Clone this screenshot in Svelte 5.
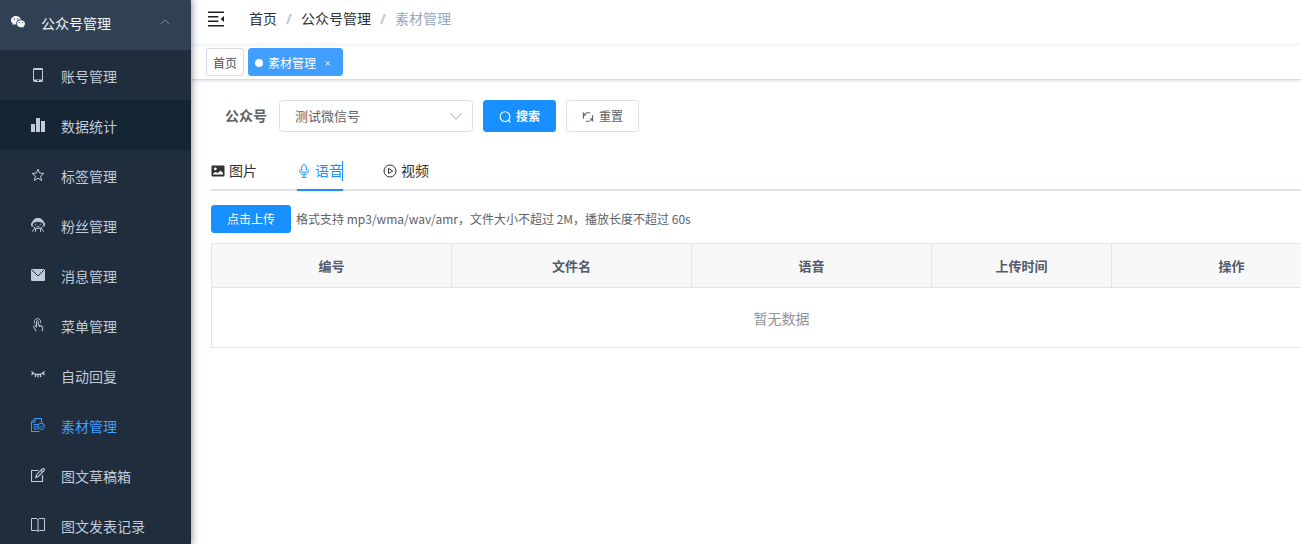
<script>
  const menuItems = [
    { icon: "phone", label: "账号管理" },
    { icon: "chart", label: "数据统计", hover: true },
    { icon: "star", label: "标签管理" },
    { icon: "people", label: "粉丝管理" },
    { icon: "message", label: "消息管理" },
    { icon: "touch", label: "菜单管理" },
    { icon: "eye", label: "自动回复" },
    { icon: "material", label: "素材管理", active: true },
    { icon: "edit", label: "图文草稿箱" },
    { icon: "book", label: "图文发表记录" },
  ];

  const tabs = [
    { name: "image", label: "图片" },
    { name: "voice", label: "语音" },
    { name: "video", label: "视频" },
  ];

  const columns = [
    { label: "编号", width: 240 },
    { label: "文件名", width: 240 },
    { label: "语音", width: 240 },
    { label: "上传时间", width: 180 },
    { label: "操作", width: 240 },
  ];

  let menuOpen = $state(true);
  let activeTab = $state("voice");
  let account = $state("test");
</script>

{#snippet icon(name)}
  <svg class="icon" viewBox="0 0 14 14" fill="none" stroke="currentColor" aria-hidden="true">
    {#if name === "wechat"}
      <g fill="currentColor" stroke="none">
        <path fill-rule="evenodd" d="M5 1C2.200 1 0 2.900 0 5.300c0 1.400.7 2.500 1.900 3.300l-.5 1.500 1.800-.9c.6.200 1.200.3 2 .3C4.700 6.500 6.900 4.400 9.900 4.500 9.500 2.400 7.500 1 5 1zM3.300 3.200a.7.700 0 1 1 0 1.400.7.700 0 0 1 0-1.400zM6.800 3.200a.7.700 0 1 1 0 1.400.7.700 0 0 1 0-1.400z" />
        <path fill-rule="evenodd" d="M14 8.700C14 6.700 12.200 5.200 9.900 5.200S5.800 6.800 5.800 8.700s1.800 3.500 4.100 3.500c.5 0 1-.1 1.500-.2l1.400.8-.4-1.300c1-.7 1.600-1.700 1.600-2.800zM8.500 7a.6.600 0 1 1 0 1.200.6.600 0 0 1 0-1.200zM11.300 7a.6.600 0 1 1 0 1.200.6.600 0 0 1 0-1.200z" />
      </g>
    {:else if name === "phone"}
      <rect x="2.500" y=".5" width="9" height="13" rx="1" />
      <path d="M2.500 1h9M2.500 12.500h9" stroke-width="2" />
      <path d="M6 12.500h2" stroke="#1f2d3d" />
    {:else if name === "chart"}
      <path d="M0 6h4v8H0zM5 0h4v14H5zM10 3h4v11h-4z" fill="currentColor" stroke="none" />
    {:else if name === "star"}
      <path d="M7 1.200l1.600 3.900 4.200.3-3.200 2.700 1 4.400L7 10.200l-3.600 2.300 1-4.400L1.200 5.400l4.200-.3z" />
    {:else if name === "people"}
      <path d="M1.500 6.500C1.500 3 3.500.7 7 .7s5.500 2.300 5.500 5.800c0 2.700-2.100 4-5.500 4s-5.500-1.300-5.500-4z" />
      <path d="M1.500 5C2 2 4 .5 7 .5S12 2 12.500 5C10 3 4 3 1.500 5z" fill="currentColor" />
      <path d="M4.800 5.700v1.500M9.200 5.700v1.500M5.500 8.700h3M.6 4.800v3.400M13.400 4.800v3.400" />
      <path d="M3.700 10.200L1.300 13.700M10.300 10.200l2.400 3.500M4.500 10.500v3.300M9.500 10.500v3.300" />
    {:else if name === "message"}
      <rect y="1" width="14" height="12" rx="1" fill="currentColor" stroke="none" />
      <path d="M.5 1.500L7 8l6.500-6.500" stroke="#1f2d3d" />
    {:else if name === "touch"}
      <path d="M3.800 5.500C2.500 2.700 4.300.7 6.500.7s4 2 2.700 4.500M5.500 9.500V3.500c0-1.200 1.800-1.200 1.800 0v3.600l3.200.8c1.100.3 1.500 1 1.300 2l-.7 3.300M5.500 8.500L3.800 7.700c-.8-.3-1.500.5-1.100 1.200l2.500 4.300M8.500 7.500V9M10.300 8v1.300" />
    {:else if name === "eye"}
      <path stroke-width="1.300" d="M.5 3.300C3.500 7.500 10.500 7.500 13.500 3.300M2.300 5.200L.5 7M4.800 6.300L4.200 9M7 6.500v3M9.200 6.300l.6 2.700M11.700 5.200L13.500 7" />
    {:else if name === "material"}
      <path d="M8.500 13.500h-8V4L4 .5h6.500v4M4 .5V4H.5M2.500 6.500H7M2.500 8.800h4M2.500 11h4.500" />
      <circle cx="10.300" cy="8.300" r="3.200" />
      <path d="M8.800 8.300l1.200 1.200 2-2.200" />
    {:else if name === "edit"}
      <path d="M7.500 2.500h-7v11h11V7" stroke-width="1.200" />
      <path d="M4.800 9.500l.7-2.800L11.300.9c.6-.6 1.200-.5 1.700 0s.6 1.100 0 1.700L7.300 8.500zM10 2.200l1.800 1.800" stroke-width="1.200" />
    {:else if name === "book"}
      <path d="M.5.500H5c1.200 0 2 .6 2 1.500C7 1.100 7.800.5 9 .5h4.500v12H9c-1.200 0-2 .5-2 1 0-.5-.8-1-2-1H.5zM7 2v11.500" />
    {:else if name === "fold"}
      <path d="M0 1h14M0 5h9M0 9h9M0 13h14" stroke-width="1.300" />
      <path d="M14 4.300v5.400L11 7z" fill="currentColor" stroke="none" />
    {:else if name === "image"}
      <path fill-rule="evenodd" d="M1.500 1.500h11c.6 0 1 .4 1 1v9c0 .6-.4 1-1 1h-11c-.6 0-1-.4-1-1v-9c0-.6.4-1 1-1zM2 10.500h10V9L9.500 6.500 7 9 4.500 8 2 9.500zM4.300 3.500a1.400 1.400 0 1 0 0 2.800 1.400 1.400 0 0 0 0-2.800z" fill="currentColor" stroke="none" />
    {:else if name === "voice"}
      <rect x="4.700" y=".7" width="4.600" height="8" rx="2.300" />
      <path d="M2.700 5.500v1C2.700 9 4.500 10.700 7 10.700S11.300 9 11.300 6.500v-1M7 10.700v2.500M4.500 13.300h5" />
    {:else if name === "video"}
      <circle cx="7" cy="7" r="6" />
      <path d="M5.500 4.500v5L9.700 7z" />
    {:else if name === "search"}
      <circle cx="7" cy="6.500" r="5.700" stroke-width="1.300" />
      <path d="M10.800 10.300l2.500 3" stroke-width="1.300" />
    {:else if name === "refresh"}
      <path d="M1.700 9V6.500C1.700 4 4 2 7 2h2.500M12.300 5v2.500C12.300 10 10 12 7 12H4.500M1.500 1.500v3.300h3M12.500 12.500V9.200h-3" stroke-width="1.200" />
    {:else if name === "up"}
      <path d="M2 9.500l5-5 5 5" />
    {:else if name === "down"}
      <path d="M1.500 4.500L7 10l5.500-5.500" stroke-width="1.200" />
    {/if}
  </svg>
{/snippet}

<div class="app">
  <nav class="sidebar">
    <button class="menu-title" aria-expanded={menuOpen} onclick={() => (menuOpen = !menuOpen)}>
      {@render icon("wechat")}
      <span class="menu-name">公众号管理</span>
      <span class="menu-arrow" class:closed={!menuOpen}>{@render icon("up")}</span>
    </button>
    {#if menuOpen}
      <ul class="menu">
        {#each menuItems as item}
          <li>
            <a href="#{item.icon}" class="menu-item" class:active={item.active} class:hover={item.hover}>
              {@render icon(item.icon)}
              <span>{item.label}</span>
            </a>
          </li>
        {/each}
      </ul>
    {/if}
  </nav>

  <div class="main">
    <header class="navbar">
      <button class="hamburger" aria-label="折叠菜单">{@render icon("fold")}</button>
      <nav class="breadcrumb">
        <a href="#home">首页</a>
        <span class="separator">/</span>
        <span class="crumb">公众号管理</span>
        <span class="separator">/</span>
        <span class="current">素材管理</span>
      </nav>
    </header>

    <div class="tags-view">
      <a href="#home" class="tag">首页</a>
      <a href="#material" class="tag tag-active">
        <span class="dot"></span>
        素材管理
        <svg class="tag-close" viewBox="0 0 6 6" stroke="currentColor" aria-hidden="true">
          <path d="M.8 1.300l4 4M4.800 1.300l-4 4" />
        </svg>
      </a>
    </div>

    <main class="content">
      <form class="search-form" onsubmit={(e) => e.preventDefault()}>
        <label for="account">公众号</label>
        <div class="select">
          <select id="account" bind:value={account}>
            <option value="test">测试微信号</option>
          </select>
          <span class="select-arrow">{@render icon("down")}</span>
        </div>
        <button type="submit" class="button primary bold">{@render icon("search")}<span>搜索</span></button>
        <button type="reset" class="button">{@render icon("refresh")}<span>重置</span></button>
      </form>

      <div class="tabs" role="tablist">
        {#each tabs as tab}
          <button
            role="tab"
            class="tab"
            class:selected={activeTab === tab.name}
            aria-selected={activeTab === tab.name}
            onclick={() => (activeTab = tab.name)}
          >
            {@render icon(tab.name)}
            <span>{tab.label}</span>
          </button>
        {/each}
      </div>

      <div class="upload">
        <button class="button primary small">点击上传</button>
        <span class="tip">格式支持 mp3/wma/wav/amr，文件大小不超过 2M，播放长度不超过 60s</span>
      </div>

      <table>
        <colgroup>
          {#each columns as column}
            <col style="width: {column.width}px" />
          {/each}
        </colgroup>
        <thead>
          <tr>
            {#each columns as column}
              <th>{column.label}</th>
            {/each}
          </tr>
        </thead>
        <tbody>
          <tr>
            <td class="empty" colspan={columns.length}>暂无数据</td>
          </tr>
        </tbody>
      </table>
    </main>
  </div>
</div>

<style>
  :global(body) {
    margin: 0;
  }

  .app {
    display: flex;
    height: 100vh;
    overflow: hidden;
    background: #fff;
    color: #303133;
    font-family: "Open Sans", "Noto Sans CJK SC", sans-serif;
    font-size: 14px;
  }

  .app * {
    box-sizing: border-box;
  }

  button,
  select {
    font-family: inherit;
    cursor: pointer;
  }

  a {
    color: inherit;
    text-decoration: none;
  }

  .icon {
    display: block;
    flex: none;
    width: 14px;
    height: 14px;
  }

  .sidebar {
    flex: none;
    width: 191px;
    background: #1f2d3d;
    color: #bfcbd9;
    box-shadow: 2px 0 6px rgba(0, 21, 41, 0.35);
    z-index: 1;
  }

  .menu-title {
    display: flex;
    align-items: center;
    width: 100%;
    height: 50px;
    padding: 0 20px 6px 11px;
    border: none;
    background: #304156;
    color: #f4f4f5;
    font-size: 14px;
  }

  .menu-name {
    flex: 1;
    padding: 4px 0 0 16px;
    line-height: 20px;
    text-align: left;
  }

  .menu-arrow {
    color: #909399;
  }

  .menu-arrow .icon {
    width: 12px;
    height: 12px;
  }

  .menu-arrow.closed {
    transform: rotate(180deg);
  }

  .menu {
    margin: 0;
    padding: 0;
    list-style: none;
  }

  .menu-item {
    display: flex;
    align-items: center;
    gap: 16px;
    height: 50px;
    padding-left: 31px;
  }

  .menu-item span {
    padding-top: 4px;
    line-height: 20px;
  }

  .menu-item.hover,
  .menu-item:hover {
    background: #152534;
  }

  .menu-item.active {
    color: #409eff;
  }

  .main {
    flex: 1;
    min-width: 0;
    overflow: hidden;
  }

  .navbar {
    display: flex;
    align-items: center;
    gap: 25px;
    height: 44px;
    padding: 0 17px 6px;
    box-shadow: 0 1px 4px rgba(0, 21, 41, 0.08);
  }

  .hamburger {
    padding: 0;
    border: none;
    background: none;
    color: #1f1f1f;
  }

  .hamburger .icon {
    width: 16px;
    height: 16px;
  }

  .breadcrumb {
    display: flex;
    line-height: 20px;
  }

  .separator {
    width: 24px;
    color: #c0c4cc;
    font-weight: 700;
    text-align: center;
  }

  .current {
    color: #97a8be;
  }

  .tags-view {
    display: flex;
    align-items: center;
    gap: 4px;
    height: 36px;
    padding-left: 15px;
    border-bottom: 1px solid #d8dce5;
    box-shadow: 0 1px 3px rgba(0, 0, 0, 0.12);
  }

  .tag {
    display: flex;
    align-items: center;
    height: 28px;
    padding: 2px 6px 0;
    border: 1px solid #d8dce5;
    border-radius: 3px;
    color: #495060;
    font-size: 12px;
  }

  .tag-active {
    padding-right: 11px;
    border-color: #409eff;
    background: #409eff;
    color: #fff;
  }

  .dot {
    width: 8px;
    height: 8px;
    margin-right: 5px;
    border-radius: 50%;
    background: #fff;
  }

  .tag-close {
    width: 6px;
    height: 6px;
    margin-left: 9px;
  }

  .content {
    padding: 20px;
  }

  .search-form {
    display: flex;
    align-items: center;
    gap: 10px;
  }

  .search-form label {
    width: 58px;
    padding-right: 2px;
    color: #606266;
    font-weight: 700;
    line-height: 20px;
    text-align: right;
  }

  .select {
    display: grid;
    align-items: center;
    width: 194px;
  }

  .select select {
    grid-area: 1 / 1;
    height: 32px;
    padding: 0 30px 0 15px;
    border: 1px solid #dcdfe6;
    border-radius: 4px;
    background: #fff;
    color: #606266;
    font-size: 13px;
    appearance: none;
  }

  .select-arrow {
    grid-area: 1 / 1;
    justify-self: end;
    padding-right: 10px;
    color: #c0c4cc;
    pointer-events: none;
  }

  .button {
    display: flex;
    align-items: center;
    gap: 5px;
    height: 32px;
    padding: 1px 15px 0;
    border: 1px solid #dcdfe6;
    border-radius: 3px;
    background: #fff;
    color: #606266;
    font-size: 12px;
    line-height: 16px;
  }

  .button .icon {
    width: 12px;
    height: 12px;
  }

  .button.primary {
    border-color: #1890ff;
    background: #1890ff;
    color: #fff;
  }

  .button.bold {
    font-weight: 700;
  }

  .button.small {
    height: 28px;
  }

  .tabs {
    display: flex;
    gap: 40px;
    margin: 19px -20px 14px 0;
    border-bottom: 2px solid #dfe4ed;
  }

  .tab {
    display: flex;
    align-items: center;
    gap: 4px;
    height: 40px;
    margin-bottom: -2px;
    padding: 2px 0 0;
    border: none;
    border-bottom: 2px solid transparent;
    background: none;
    color: #303133;
    font-size: 14px;
    line-height: 20px;
  }

  .tab.selected {
    border-bottom-color: #1890ff;
    color: #1890ff;
  }

  .tab.selected span {
    box-shadow: inset -1px 0 #1890ff;
  }

  .upload {
    display: flex;
    align-items: center;
    gap: 5px;
    margin-bottom: 10px;
  }

  .tip {
    color: #606266;
    font-family: "Noto Sans CJK SC", sans-serif;
    font-size: 12px;
    line-height: 16px;
    white-space: nowrap;
  }

  table {
    width: 100%;
    min-width: 1141px;
    border-collapse: collapse;
    table-layout: fixed;
  }

  th,
  td {
    border: 1px solid #dfe6ec;
    padding: 0;
    text-align: center;
  }

  th {
    height: 44px;
    background: #f8f8f9;
    color: #515a6e;
    font-size: 13px;
    font-weight: 700;
  }

  .empty {
    height: 60px;
    color: #909399;
  }
</style>
